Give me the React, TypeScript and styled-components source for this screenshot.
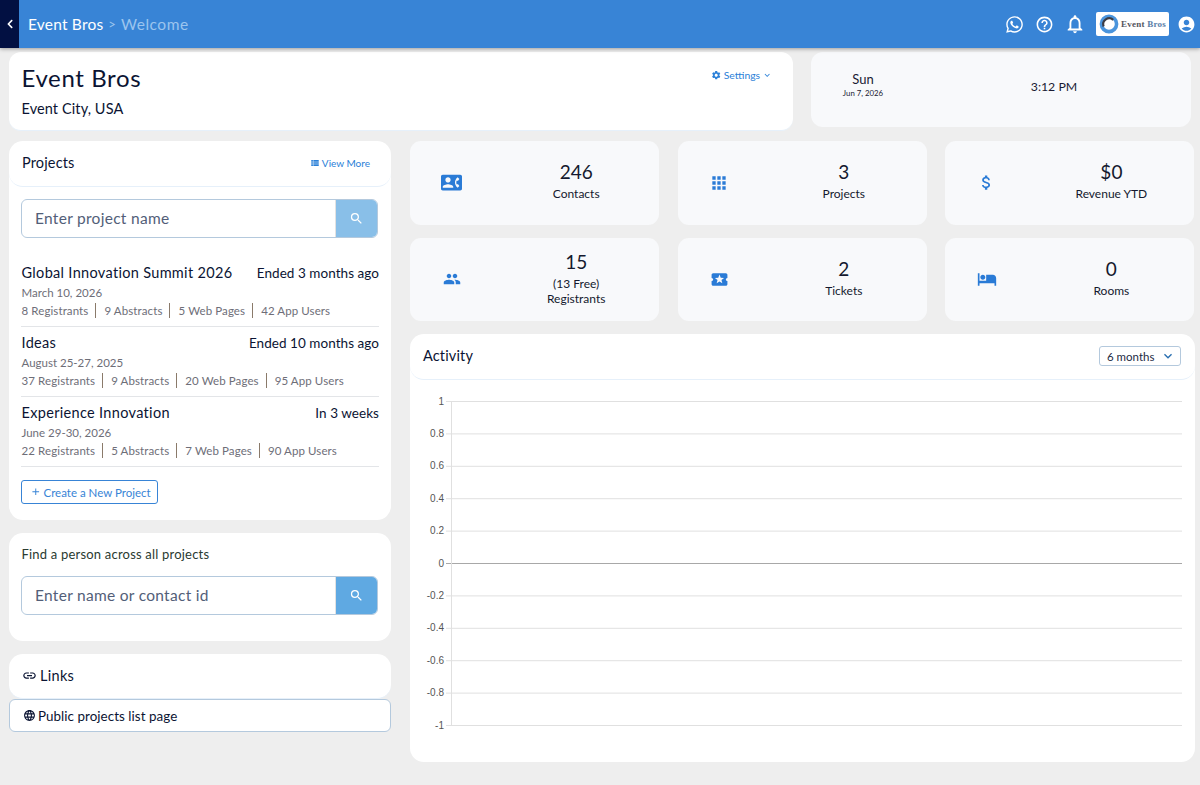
import React from "react";
import styled, { createGlobalStyle } from "styled-components";
import {
  MdHelpOutline, MdNotificationsNone, MdAccountCircle, MdSearch, MdViewList, MdSettings,
  MdExpandMore, MdContactPhone, MdApps, MdAttachMoney, MdPeople, MdLocalActivity, MdHotel, MdLink, MdLanguage, MdAdd,
} from "react-icons/md";
import { FaWhatsapp, FaChevronLeft } from "react-icons/fa";

const FONT = `"Lato", "Noto Sans", "Liberation Sans", sans-serif`;

const Global = createGlobalStyle`
  html, body { margin: 0; padding: 0; background: #eeeeee; }
  body { font-family: ${FONT}; color: #0b1433; width: 1200px; height: 785px; overflow: hidden; }
  * { box-sizing: border-box; }
`;

const Header = styled.header`
  height: 48px; background: #3884d6; display: flex; align-items: center;
  box-shadow: 0 1px 4px rgba(0,0,0,.35); position: relative; z-index: 2;
`;
const Back = styled.div`
  width: 19px; height: 48px; background: #021042; color: #fff; display: flex; align-items: center; justify-content: center; font-size: 10px;
`;
const Crumbs = styled.div`
  margin-left: 9px; font-size: 15.5px; color: #fff; display: flex; align-items: center; flex: 1; letter-spacing: .2px;
`;
const CrumbSep = styled.span`margin: 0 5px 0 5px; color: #9cc5ee; font-size: 13px;`;
const CrumbDim = styled.span`color: #9cc5ee; letter-spacing: .5px;`;
const HeaderIcons = styled.div`display: flex; align-items: center; margin-right: 4px;`;
const HeadIcon = styled.span<{ $mr: number; $size?: number }>`
  display: flex; color: #fff; font-size: ${p => p.$size ?? 19}px; margin-right: ${p => p.$mr}px;
`;
const Logo = styled.div`
  width: 73px; height: 24px; background: #fff; border-radius: 2px; display: flex; align-items: center; padding-left: 3px; gap: 2px; margin-right: 8px;
`;
const LogoText = styled.span`
  font-family: "Liberation Serif", serif; font-weight: 700; font-size: 9px; color: #55555e; letter-spacing: .25px; white-space: nowrap;
`;
const LogoAccent = styled.span`color: #5a7ea8;`;

const Page = styled.main`padding: 4px 0 0 9px;`;
const TopRow = styled.section`display: flex; gap: 18px; align-items: flex-start;`;
const Hero = styled.div`
  width: 784px; height: 79px; background: #fff; border-radius: 12px; padding: 12px 12.5px; display: flex; justify-content: space-between;
  border-bottom: 1px solid #e6f0fa;
`;
const HeroTitle = styled.h1`margin: 0; font-weight: 400; font-size: 24px; line-height: 28px; letter-spacing: .62px;`;
const HeroSub = styled.div`margin-top: 8px; font-size: 14.5px; line-height: 18px; letter-spacing: .1px;`;
const SettingsLink = styled.a`
  color: #2a80d8; font-size: 10.4px; display: flex; align-items: center; gap: 2px; height: 22px; margin-right: 8px;
`;
const Clock = styled.div`
  width: 380px; height: 75px; background: #f8f9fb; border-radius: 12px; display: grid; grid-template-columns: 104px 1fr; text-align: center; padding-top: 20px; color: #1a1a33;
`;
const Day = styled.div`font-size: 13px; line-height: 15px;`;
const DateSmall = styled.div`font-size: 7.8px; line-height: 12px;`;
const Time = styled.div`font-size: 12.3px; line-height: 30px; padding-left: 2px;`;

const Columns = styled.div`display: grid; grid-template-columns: 382px 785px; gap: 19px; margin-top: 10px;`;
const LeftCol = styled.div`display: flex; flex-direction: column; gap: 13px;`;
const RightCol = styled.div`display: flex; flex-direction: column; gap: 13px;`;
const Card = styled.div<{ $h: number }>`
  background: #fff; border-radius: 14px; height: ${p => p.$h}px; overflow: hidden;
`;
const CardHead = styled.div<{ $h: number }>`
  height: ${p => p.$h}px; display: flex; align-items: center; justify-content: space-between; padding: 0 13px 2px 13px;
  border-bottom: 1px solid #e6f0fa; border-radius: 0 0 14px 14px; font-size: 14.5px; letter-spacing: .15px;
`;
const ViewMore = styled.a`color: #2a80d8; font-size: 10px; display: flex; align-items: center; gap: 2px; margin-right: 8px; letter-spacing: 0; svg { font-size: 10px; }`;
const Body = styled.div`padding: 12px 12px 0;`;
const SearchBox = styled.div`
  height: 39px; display: flex; border: 1px solid #b4c9dd; border-radius: 6px; overflow: hidden; background: #fff; margin-right: 1px;
`;
const SearchText = styled.div`flex: 1; padding-left: 13px; font-size: 15.5px; line-height: 37px; color: #525e78; letter-spacing: .29px;`;
const SearchBtn = styled.div<{ $dim?: boolean }>`
  width: 42px; background: ${p => (p.$dim ? "#89bfe8" : "#5fa9e2")}; color: #fff; display: flex; align-items: center; justify-content: center; font-size: 15px;
  border-left: 1px solid #e2e2e2;
`;
const ProjectList = styled.div`margin-top: 25px;`;
const ProjectRow = styled.div`border-bottom: 1px solid #e3e5e8; padding-bottom: 8px; margin-bottom: 6px;`;
const ProjectTop = styled.div`display: flex; justify-content: space-between; align-items: baseline; font-size: 14.5px; line-height: 20px;`;
const ProjectName = styled.span`letter-spacing: .32px; margin-left: .5px;`;
const ProjectWhen = styled.span`font-size: 13.5px; letter-spacing: .05px;`;
const ProjectDate = styled.div`font-size: 11.5px; line-height: 15px; color: #6e6e78; margin-top: 2px; margin-left: .5px;`;
const Stats = styled.div`font-size: 11.5px; line-height: 15px; color: #6e6e78; display: flex; margin-top: 3px; margin-left: .5px; letter-spacing: .1px;`;
const Stat = styled.span<{ $c?: string }>`
  & + & { margin-left: 7px; padding-left: 8px; border-left: 1.5px solid ${p => p.$c ?? "#5a7aa0"}; }
`;
const CreateBtn = styled.a`
  display: flex; align-items: center; gap: 2px; height: 24px; width: 137px; padding-left: 8px;
  border: 1px solid #3884d6; border-radius: 3px; color: #3884d6; font-size: 11.5px; margin-top: 13px;
`;
const FindLabel = styled.div`font-size: 13px; line-height: 16px; color: #2a3a30; margin-bottom: 14px; padding-top: 1px; padding-left: .5px; letter-spacing: .2px;`;
const LinksHead = styled.div`
  height: 43px; padding-left: 13px; display: flex; align-items: center; gap: 3px; font-size: 14.5px; letter-spacing: .3px;
  svg { font-size: 15px; }
`;
const LinkRow = styled.a`
  display: flex; align-items: center; gap: 2px; height: 33px; padding-left: 13px; border: 1px solid #b4c9dd; border-radius: 6px; font-size: 13.4px; letter-spacing: .05px; background: #fff;
  svg { font-size: 13px; }
`;
const LinksCard = styled.div`display: flex; flex-direction: column;`;
const LinksTop = styled.div`background: #fff; border-radius: 14px; height: 45px; border-bottom: 1px solid #e6f0fa;`;

const StatGrid = styled.div`display: grid; grid-template-columns: repeat(3, 249.3px); column-gap: 18.3px; row-gap: 13px; width: 785px;`;
const StatCard = styled.div`
  height: 83.5px; background: #f8f9fb; border-radius: 11px; display: grid; grid-template-columns: 1fr 2fr; align-items: center; text-align: center;
`;
const StatIcon = styled.div<{ $size: number }>`color: #2a7bd6; font-size: ${p => p.$size}px; display: flex; justify-content: center;`;
const StatText = styled.div<{ $multi: boolean }>`padding-bottom: ${p => (p.$multi ? 1 : 3)}px;`;
const StatNum = styled.div`font-size: 19px; line-height: 22px; color: #14192e; margin-bottom: 3px;`;
const StatLabel = styled.div`font-size: 12px; line-height: 15.5px; color: #14192e;`;

const ActivityHead = styled(CardHead)``;
const Select = styled.div`
  width: 82px; height: 20px; margin: 1px 1px 0 0; border: 1px solid #b4c9dd; border-radius: 3px; font-size: 11.5px; display: flex; align-items: center; justify-content: space-between; padding: 0 4px 0 7px; color: #1c2a44; background: #fff; letter-spacing: 0;
  svg { color: #2a6fb0; }
`;

const xs = { l: 40, r: 772 };
function Chart() {
  const labels = ["1", "0.8", "0.6", "0.4", "0.2", "0", "-0.2", "-0.4", "-0.6", "-0.8", "-1"];
  return (
    <svg width="785" height="380" style={{ display: "block" }}>
      {labels.map((l, i) => {
        const y = 21.5 + i * 32.4;
        const zero = l === "0";
        return (
          <g key={l}>
            <line x1={xs.l - 4} x2={xs.r} y1={y} y2={y} stroke={zero ? "#a8a8a8" : "#e0e0e0"} />
            <text x={xs.l - 6} y={y + 3} textAnchor="end" fontFamily="Liberation Sans, sans-serif" fontSize="10" fill="#555">{l}</text>
          </g>
        );
      })}
      <line x1={xs.l + 1.5} x2={xs.l + 1.5} y1="21" y2="346" stroke="#e0e0e0" />
    </svg>
  );
}

const projects = [
  { name: "Global Innovation Summit 2026", when: "Ended 3 months ago", date: "March 10, 2026", s: ["8 Registrants", "9 Abstracts", "5 Web Pages", "42 App Users"] },
  { name: "Ideas", when: "Ended 10 months ago", date: "August 25-27, 2025", s: ["37 Registrants", "9 Abstracts", "20 Web Pages", "95 App Users"] },
  { name: "Experience Innovation", when: "In 3 weeks", date: "June 29-30, 2026", s: ["22 Registrants", "5 Abstracts", "7 Web Pages", "90 App Users"] },
];
const sepColors = ["#5a7aa0", "#7a4a6a", "#8a7a6a"];

const stats: { icon: React.ReactNode; size: number; num: string; labels: string[] }[] = [
  { icon: <MdContactPhone />, size: 21, num: "246", labels: ["Contacts"] },
  { icon: <MdApps />, size: 20, num: "3", labels: ["Projects"] },
  { icon: <MdAttachMoney />, size: 19, num: "$0", labels: ["Revenue YTD"] },
  { icon: <MdPeople />, size: 18, num: "15", labels: ["(13 Free)", "Registrants"] },
  { icon: <MdLocalActivity />, size: 19, num: "2", labels: ["Tickets"] },
  { icon: <MdHotel />, size: 20, num: "0", labels: ["Rooms"] },
];

export default function App() {
  return (
    <>
      <Global />
      <Header>
        <Back><FaChevronLeft /></Back>
        <Crumbs>Event Bros<CrumbSep>&gt;</CrumbSep><CrumbDim>Welcome</CrumbDim></Crumbs>
        <HeaderIcons>
          <HeadIcon $mr={11}><FaWhatsapp /></HeadIcon>
          <HeadIcon $mr={10}><MdHelpOutline /></HeadIcon>
          <HeadIcon $mr={10} $size={22}><MdNotificationsNone /></HeadIcon>
          <Logo>
            <svg width="20" height="20" viewBox="0 0 20 20">
              <circle cx="10" cy="10" r="7.6" fill="none" stroke="#4a94dc" strokeWidth="3.6" />
              <path d="M4.6 12.5a6 6 0 0 1 9.6-6.6" fill="none" stroke="#3c3c44" strokeWidth="2.2" />
              <circle cx="10.5" cy="10.5" r="3.6" fill="#fff" />
            </svg>
            <LogoText>Event <LogoAccent>Bros</LogoAccent></LogoText>
          </Logo>
          <HeadIcon $mr={0}><MdAccountCircle /></HeadIcon>
        </HeaderIcons>
      </Header>
      <Page>
        <TopRow>
          <Hero>
            <div>
              <HeroTitle>Event Bros</HeroTitle>
              <HeroSub>Event City, USA</HeroSub>
            </div>
            <SettingsLink><MdSettings />Settings<MdExpandMore /></SettingsLink>
          </Hero>
          <Clock>
            <div><Day>Sun</Day><DateSmall>Jun 7, 2026</DateSmall></div>
            <Time>3:12 PM</Time>
          </Clock>
        </TopRow>
        <Columns>
          <LeftCol>
            <Card $h={379}>
              <CardHead $h={46}>Projects<ViewMore><MdViewList />View More</ViewMore></CardHead>
              <Body>
                <SearchBox><SearchText>Enter project name</SearchText><SearchBtn $dim><MdSearch /></SearchBtn></SearchBox>
                <ProjectList>
                  {projects.map(p => (
                    <ProjectRow key={p.name}>
                      <ProjectTop><ProjectName>{p.name}</ProjectName><ProjectWhen>{p.when}</ProjectWhen></ProjectTop>
                      <ProjectDate>{p.date}</ProjectDate>
                      <Stats>{p.s.map((t, i) => <Stat key={t} $c={sepColors[i - 1]}>{t}</Stat>)}</Stats>
                    </ProjectRow>
                  ))}
                </ProjectList>
                <CreateBtn><MdAdd />Create a New Project</CreateBtn>
              </Body>
            </Card>
            <Card $h={108}>
              <Body>
                <FindLabel>Find a person across all projects</FindLabel>
                <SearchBox><SearchText>Enter name or contact id</SearchText><SearchBtn><MdSearch /></SearchBtn></SearchBox>
              </Body>
            </Card>
            <LinksCard>
              <LinksTop><LinksHead><MdLink />Links</LinksHead></LinksTop>
              <LinkRow><MdLanguage />Public projects list page</LinkRow>
            </LinksCard>
          </LeftCol>
          <RightCol>
            <StatGrid>
              {stats.map(s => (
                <StatCard key={s.labels[s.labels.length - 1]}>
                  <StatIcon $size={s.size}>{s.icon}</StatIcon>
                  <StatText $multi={s.labels.length > 1}>
                    <StatNum>{s.num}</StatNum>
                    {s.labels.map(l => <StatLabel key={l}>{l}</StatLabel>)}
                  </StatText>
                </StatCard>
              ))}
            </StatGrid>
            <Card $h={428}>
              <ActivityHead $h={46}>Activity<Select>6 months<MdExpandMore size={16} /></Select></ActivityHead>
              <Chart />
            </Card>
          </RightCol>
        </Columns>
      </Page>
    </>
  );
}
